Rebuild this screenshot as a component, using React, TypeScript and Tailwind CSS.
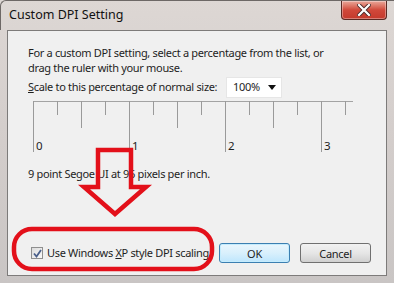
const FONT = { fontFamily: '"Noto Sans", "Open Sans", sans-serif' };

function Ruler() {
  const ticks = Array.from({ length: 14 }, (_, i) => i);
  return (
    <svg width="330" height="56" className="block mt-[3px]" style={FONT}>
      <line x1="5" y1="0.5" x2="325" y2="0.5" stroke="#a3a3a3" />
      {ticks.map((i) => {
        const x = 5.5 + i * 24;
        const len = i % 4 === 0 ? 51 : i % 2 === 0 ? 27 : 14;
        return <line key={i} x1={x} y1="0" x2={x} y2={len} stroke="#9a9a9a" />;
      })}
      {[0, 1, 2, 3].map((n) => (
        <text key={n} x={8 + n * 96} y="49" fontSize="11.5" fill="#1e1e1e">
          {n}
        </text>
      ))}
    </svg>
  );
}

function CloseButton() {
  return (
    <div className="w-[46px] h-[19px] rounded-b-[4px] border border-t-0 border-[#5a2a24] bg-gradient-to-b from-[#e8a79a] via-[#d0483a] to-[#c4392c] flex items-center justify-center shadow-[inset_0_0_0_1px_rgba(255,255,255,0.35)]">
      <svg width="14" height="12" viewBox="0 0 14 12">
        <path d="M2 1 L12 11 M12 1 L2 11" stroke="#4a2a2a" strokeWidth="4" strokeLinecap="square" />
        <path d="M2 1 L12 11 M12 1 L2 11" stroke="#ffffff" strokeWidth="2.2" strokeLinecap="square" />
      </svg>
    </div>
  );
}

export default function App() {
  return (
    <div
      className="relative w-[394px] h-[283px] overflow-hidden bg-gradient-to-b from-[#ddd7d4] via-[#d3cdcb] to-[#c9c5c4] text-[#1e1e1e] text-[11px] tracking-[-0.32px]"
      style={FONT}
    >
      <div className="h-[30px] flex items-start justify-between pl-[8px] pr-[7px] border-t border-l border-[#6d6866] rounded-tl-[6px]">
        <span className="mt-[6px] text-[12.5px] leading-[16px] tracking-normal text-[#111]">Custom DPI Setting</span>
        <CloseButton />
      </div>

      <div className="mx-[7px] h-[246px] border border-[#7d7b7a] bg-[#f0f0f0] flex flex-col pl-[20px] pr-[15px]">
        <p className="mt-[14px] leading-[15px]">
          For a custom DPI setting, select a percentage from the list, or
          <br />
          drag the ruler with your mouse.
        </p>

        <div className="mt-[2px] h-[21px] flex items-center">
          <span className="w-[198px] whitespace-nowrap">
            <span className="underline">S</span>cale to this percentage of normal size:
          </span>
          <div className="w-[56px] h-[21px] bg-white border border-[#e6e6e6] flex items-center pl-[6px] pr-[5px]">
            <span className="flex-1">100%</span>
            <svg width="8" height="5" viewBox="0 0 8 5">
              <path d="M0 0 H8 L4 5 Z" fill="#111" />
            </svg>
          </div>
        </div>

        <Ruler />

        <p className="mt-[9px] leading-[15px]">9 point Segoe UI at 96 pixels per inch.</p>

        <div className="mt-auto mb-[12px] flex items-center">
          <label className="ml-[3px] flex items-center gap-[4px] whitespace-nowrap">
            <span className="w-[12px] h-[12px] border border-[#8f8f8f] bg-gradient-to-br from-[#dcdcdc] to-[#fafafa] flex items-center justify-center">
              <svg width="9" height="9" viewBox="0 0 9 9">
                <path d="M1 4.5 L3.5 7.5 L8 1" fill="none" stroke="#4a5f8a" strokeWidth="1.8" />
              </svg>
            </span>
            <span>
              Use Windows <span className="underline">X</span>P style DPI scaling
            </span>
          </label>
          <div className="ml-auto flex gap-[10px]">
            <button className="w-[71px] h-[20px] rounded-[3px] border border-[#3c7fb1] bg-gradient-to-b from-[#eaf6fd] via-[#d9f0fc] to-[#bee6fd] shadow-[inset_0_0_0_1px_#c5ecfd] leading-none">
              OK
            </button>
            <button className="w-[71px] h-[20px] rounded-[3px] border border-[#707070] bg-gradient-to-b from-[#f2f2f2] via-[#e6e6e6] to-[#d0d0d0] leading-none">
              Cancel
            </button>
          </div>
        </div>
      </div>

      <svg className="absolute left-0 top-0 pointer-events-none" width="394" height="283">
        <polygon
          points="98,150 131,150 131,187 146,187 115,214 84,187 98,187"
          fill="none"
          stroke="#e3101a"
          strokeWidth="4.5"
          strokeLinejoin="miter"
        />
        <rect x="14" y="229" width="198" height="40" rx="18" fill="none" stroke="#e3101a" strokeWidth="4.5" />
      </svg>
    </div>
  );
}
